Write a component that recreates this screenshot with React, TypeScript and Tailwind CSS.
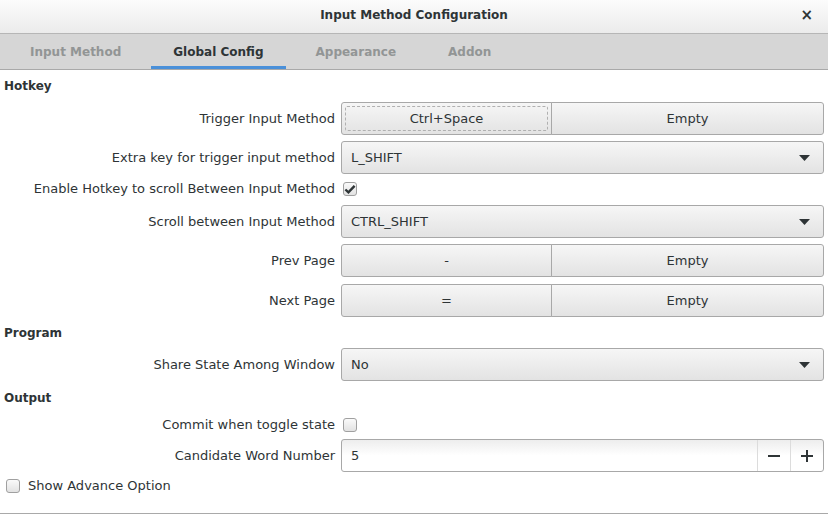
import React from "react";

const font = { fontFamily: '"DejaVu Sans", "Liberation Sans", sans-serif' };

function Btn({ children, className = "", focus = false }: { children: React.ReactNode; className?: string; focus?: boolean }) {
  return (
    <div className={`relative h-[33px] flex items-center justify-center border border-[#a8a8a8] bg-gradient-to-b from-[#f6f6f6] to-[#e3e3e3] text-[#2e3436] ${className}`}>
      {focus && <div className="absolute inset-[3px] border border-dashed border-[#b0b0b0] rounded-[2px]" />}
      <span>{children}</span>
    </div>
  );
}

function Combo({ value }: { value: string }) {
  return (
    <div className="h-[33px] flex items-center justify-between rounded-[3px] border border-[#a8a8a8] bg-gradient-to-b from-[#f6f6f6] to-[#e3e3e3] pl-[9px] pr-[13px] text-[#2e3436]">
      <span>{value}</span>
      <svg width="11" height="6" viewBox="0 0 11 6"><path d="M0 0 L11 0 L5.5 6 Z" fill="#2e3436" /></svg>
    </div>
  );
}

function Check({ checked }: { checked?: boolean }) {
  return (
    <div className="w-[14px] h-[14px] rounded-[3px] border border-[#a0a0a0] bg-gradient-to-b from-[#fafafa] to-[#e2e2e2] flex items-center justify-center">
      {checked && (
        <svg width="13" height="11" viewBox="0 0 13 11"><path d="M1.5 5.5 L4.8 8.6 L11.5 1.5" stroke="#2e3436" strokeWidth="2.6" fill="none" /></svg>
      )}
    </div>
  );
}

function Row({ label, children, h = 33, mt = 0 }: { label: string; children: React.ReactNode; h?: number; mt?: number }) {
  return (
    <div className="flex items-center" style={{ height: h, marginTop: mt }}>
      <div className="w-[335px] text-right shrink-0">{label}</div>
      <div className="pl-[6px] flex-1 pr-[4px]">{children}</div>
    </div>
  );
}

export default function App() {
  return (
    <div className="w-[828px] h-[514px] bg-white text-[13px] text-[#2e3436] overflow-hidden flex flex-col" style={font}>
      {/* title bar */}
      <div className="h-[34px] shrink-0 bg-gradient-to-b from-[#fcfcfc] to-[#ebebeb] border-b border-[#b6b6b6] relative flex items-center justify-center pb-[4px]">
        <span className="font-bold text-[#2e3436] text-[12px]">Input Method Configuration</span>
        <span className="absolute right-[15px] top-[4px] text-[15px] font-bold text-[#2e3436]">×</span>
      </div>
      {/* tabs */}
      <div className="h-[36px] shrink-0 bg-[#d6d6d6] border-b border-[#a9a9a9] flex pl-[8px] gap-[8px]">
        {[
          ["Input Method", false],
          ["Global Config", true],
          ["Appearance", false],
          ["Addon", false],
        ].map(([t, a]) => (
          <div
            key={t as string}
            className={`px-[22px] h-full flex items-center justify-center font-bold text-[12px] pt-[3px] border-b-[3px] ${a ? "text-[#2e3436] border-[#4a90d9]" : "text-[#929595] border-transparent"}`}
          >
            {t}
          </div>
        ))}
      </div>
      {/* content */}
      <div className="flex-1 flex flex-col">
        <div className="font-bold text-[12px] pl-[4px] mt-[8px] h-[17px] leading-[17px]">Hotkey</div>
        <Row label="Trigger Input Method" mt={7}>
          <div className="flex">
            <Btn className="w-[211px] rounded-l-[3px]" focus>Ctrl+Space</Btn>
            <Btn className="flex-1 rounded-r-[3px] -ml-px">Empty</Btn>
          </div>
        </Row>
        <Row label="Extra key for trigger input method" mt={6}>
          <Combo value="L_SHIFT" />
        </Row>
        <Row label="Enable Hotkey to scroll Between Input Method" h={20} mt={5}>
          <div className="pl-[2px]"><Check checked /></div>
        </Row>
        <Row label="Scroll between Input Method" mt={6}>
          <Combo value="CTRL_SHIFT" />
        </Row>
        <Row label="Prev Page" mt={6}>
          <div className="flex">
            <Btn className="w-[211px] rounded-l-[3px]">-</Btn>
            <Btn className="flex-1 rounded-r-[3px] -ml-px">Empty</Btn>
          </div>
        </Row>
        <Row label="Next Page" mt={7}>
          <div className="flex">
            <Btn className="w-[211px] rounded-l-[3px]">=</Btn>
            <Btn className="flex-1 rounded-r-[3px] -ml-px">Empty</Btn>
          </div>
        </Row>
        <div className="font-bold text-[12px] pl-[4px] mt-[8px] h-[17px] leading-[17px]">Program</div>
        <Row label="Share State Among Window" mt={6}>
          <Combo value="No" />
        </Row>
        <div className="font-bold text-[12px] pl-[4px] mt-[9px] h-[17px] leading-[17px]">Output</div>
        <Row label="Commit when toggle state" h={20} mt={8}>
          <div className="pl-[2px]"><Check /></div>
        </Row>
        <Row label="Candidate Word Number" mt={4}>
          <div className="h-[33px] flex items-center rounded-[3px] border border-[#a8a8a8] bg-gradient-to-b from-[#ededed] via-white to-white">
            <span className="flex-1 pl-[9px]">5</span>
            <div className="w-[33px] h-full border-l border-[#dcdcdc] flex items-center justify-center">
              <svg width="12" height="2" viewBox="0 0 12 2"><rect width="12" height="2" fill="#2e3436" /></svg>
            </div>
            <div className="w-[33px] h-full border-l border-[#dcdcdc] flex items-center justify-center">
              <svg width="12" height="12" viewBox="0 0 12 12"><rect y="5" width="12" height="2" fill="#2e3436" /><rect x="5" width="2" height="12" fill="#2e3436" /></svg>
            </div>
          </div>
        </Row>
        <div className="flex items-center gap-[8px] pl-[6px] mt-[5px] h-[18px]">
          <Check />
          <span>Show Advance Option</span>
        </div>
      </div>
      <div className="h-px bg-[#a9a9a9] shrink-0" />
    </div>
  );
}
